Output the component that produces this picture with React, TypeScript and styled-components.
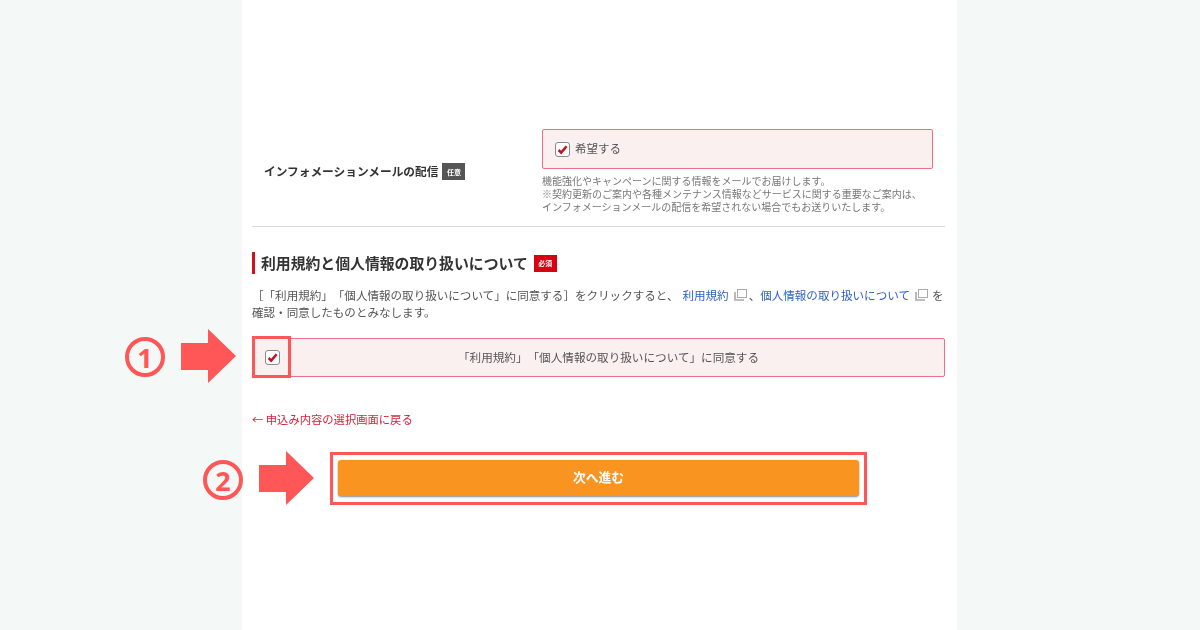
import React, { FC } from 'react';
import styled, { createGlobalStyle } from 'styled-components';

const GlobalStyle = createGlobalStyle`
  html, body {
    margin: 0;
    padding: 0;
    background: #f4f9f7;
  }

  body {
    font-family: "Noto Sans CJK JP", "Liberation Sans", sans-serif;
    text-spacing-trim: space-all;
  }
`;

const Page = styled.div`
  position: relative;
  width: 1200px;
  height: 630px;
  overflow: hidden;
  background: #f4f9f7;
`;

const Sheet = styled.main`
  box-sizing: border-box;
  width: 715px;
  height: 630px;
  margin-left: 242px;
  padding: 129px 12px 0 10px;
  background: #fff;
  filter: blur(0.45px);
`;

const MailRow = styled.section`
  display: grid;
  grid-template-columns: 290px 391px;
  align-items: center;
  padding-bottom: 13px;
  border-bottom: 1px solid #d9d9d9;
`;

const RowLabel = styled.div`
  display: flex;
  align-items: center;
  gap: 4px;
  padding: 0 0 1px 12px;
  font-size: 11.7px;
  font-weight: 700;
  color: #333;
  white-space: nowrap;
`;

const Badge = styled.span<{ $color: string }>`
  display: inline-flex;
  align-items: center;
  justify-content: center;
  box-sizing: border-box;
  width: 23px;
  height: 17px;
  margin-top: 2px;
  background: ${ props => props.$color };
  color: #fff;
  font-size: 7px;
  font-weight: 700;
`;

const CheckBoxPanel = styled.div`
  box-sizing: border-box;
  display: flex;
  align-items: center;
  gap: 5px;
  height: 40px;
  padding-left: 12px;
  background: #fbf0f0;
  border: 1px solid #ee7088;
  border-radius: 2px;
  font-size: 11.5px;
  color: #555;
`;

const PanelText = styled.span`
  padding-bottom: 2px;
`;

const Box = styled.span`
  box-sizing: border-box;
  display: inline-flex;
  align-items: center;
  justify-content: center;
  width: 15px;
  height: 15px;
  background: #fff;
  border: 1px solid #8a8a8a;
  border-radius: 3px;
`;

const Note = styled.p`
  margin: 5px 0 0;
  font-size: 10px;
  line-height: 13px;
  color: #777;
  white-space: nowrap;
`;

const Heading = styled.h2`
  box-sizing: border-box;
  display: flex;
  align-items: center;
  gap: 6px;
  height: 22px;
  margin: 25px 0 0;
  padding: 0 0 2px 6px;
  border-left: 3px solid #d0101c;
  font-size: 14.85px;
  font-weight: 700;
  color: #333;
  white-space: nowrap;
`;

const Body = styled.p`
  margin: 13px 0 0;
  font-size: 11.55px;
  line-height: 17px;
  color: #555;
  white-space: nowrap;
`;

const TextLink = styled.a<{ $indent?: number }>`
  margin-left: ${ props => props.$indent ?? 0 }px;
  color: #2f62c4;
`;

const CopyIcon = styled.svg<{ $after: number }>`
  width: 13px;
  height: 12px;
  margin: 0 ${ props => props.$after }px 0 5px;
  vertical-align: -1px;
`;

const AgreeBox = styled.div`
  box-sizing: border-box;
  display: flex;
  align-items: center;
  height: 39px;
  margin-top: 17px;
  background: #fbf0f0;
  border: 1px solid #ee7088;
  border-radius: 2px;
  font-size: 11.6px;
  color: #555;
`;

const AgreeCheck = styled.div`
  display: flex;
  justify-content: center;
  width: 39px;
`;

const AgreeText = styled.span`
  flex: 1;
  text-align: center;
  padding: 0 19px 2px 0;
`;

const BackLink = styled.a`
  display: block;
  margin-top: 34px;
  font-size: 11.3px;
  line-height: 16px;
  color: #d8233a;
`;

const ButtonFrame = styled.div`
  box-sizing: border-box;
  width: 537px;
  height: 53px;
  margin: 25px 0 0 78px;
  padding: 5px;
  border: 3px solid #ff5757;
`;

const NextButton = styled.button`
  display: block;
  width: 100%;
  height: 36px;
  padding: 0 0 3px;
  border: 0;
  border-radius: 3px;
  background: #f8941f;
  box-shadow: 0 1px 2px #8a8a8a;
  color: #fff;
  font-family: inherit;
  font-size: 12.8px;
  font-weight: 700;
`;

const CheckFrame = styled.div`
  position: absolute;
  left: 252px;
  top: 336px;
  box-sizing: border-box;
  width: 39px;
  height: 42px;
  border: 3px solid #ff5757;
`;

const StepNumber = styled.span<{ $left: number; $top: number }>`
  position: absolute;
  left: ${ props => props.$left }px;
  top: ${ props => props.$top }px;
  box-sizing: border-box;
  display: flex;
  align-items: center;
  justify-content: center;
  width: 40px;
  height: 40px;
  border: 4px solid #ff5757;
  border-radius: 50%;
  font-family: "Noto Sans", sans-serif;
  font-size: 27px;
  font-weight: 700;
  line-height: 1;
  color: #ff5757;
`;

const ArrowMark = styled.svg<{ $left: number; $top: number }>`
  position: absolute;
  left: ${ props => props.$left }px;
  top: ${ props => props.$top }px;
  width: 55px;
  height: 54px;
`;

const Check: FC = () => (
  <svg width='11' height='11' viewBox='0 0 11 11'>
    <path d='M1.6 6 L4.2 8.6 L9.6 2.2' fill='none' stroke='#c90f1e' strokeWidth='2.5' />
  </svg>
);

const Copy: FC<{ after: number }> = ({ after }) => (
  <CopyIcon $after={ after } viewBox='0 0 13 12'>
    <rect x='3.5' y='0.5' width='9' height='8' fill='#fff' stroke='#aaa' />
    <path d='M1 3 V11 H10' fill='none' stroke='#aaa' strokeWidth='1.6' />
  </CopyIcon>
);

const Arrow: FC<{ left: number; top: number }> = ({ left, top }) => (
  <ArrowMark $left={ left } $top={ top } viewBox='0 0 55 54'>
    <path d='M0 14 H27 V0 L55 27 L27 54 V41 H0 Z' fill='#ff5757' />
  </ArrowMark>
);

const App: FC = () => (
  <Page>
    <GlobalStyle />
    <Sheet>
      <MailRow>
        <RowLabel>
          インフォメーションメールの配信
          <Badge $color='#555'>任意</Badge>
        </RowLabel>
        <div>
          <CheckBoxPanel>
            <Box><Check /></Box>
            <PanelText>希望する</PanelText>
          </CheckBoxPanel>
          <Note>
            機能強化やキャンペーンに関する情報をメールでお届けします。<br />
            ※契約更新のご案内や各種メンテナンス情報などサービスに関する重要なご案内は、<br />
            インフォメーションメールの配信を希望されない場合でもお送りいたします。
          </Note>
        </div>
      </MailRow>
      <Heading>
        利用規約と個人情報の取り扱いについて
        <Badge $color='#d90012'>必須</Badge>
      </Heading>
      <Body>
        ［「利用規約」「個人情報の取り扱いについて」に同意する］をクリックすると、
        <TextLink $indent={ 4 }>利用規約</TextLink>
        <Copy after={ 2 } />、
        <TextLink>個人情報の取り扱いについて</TextLink>
        <Copy after={ 4 } />を<br />
        確認・同意したものとみなします。
      </Body>
      <AgreeBox>
        <AgreeCheck><Box><Check /></Box></AgreeCheck>
        <AgreeText>「利用規約」「個人情報の取り扱いについて」に同意する</AgreeText>
      </AgreeBox>
      <BackLink>← 申込み内容の選択画面に戻る</BackLink>
      <ButtonFrame>
        <NextButton>次へ進む</NextButton>
      </ButtonFrame>
    </Sheet>
    <CheckFrame />
    <StepNumber $left={ 125 } $top={ 337 }>1</StepNumber>
    <Arrow left={ 181 } top={ 329 } />
    <StepNumber $left={ 203 } $top={ 460 }>2</StepNumber>
    <Arrow left={ 259 } top={ 451 } />
  </Page>
);

export default App;
